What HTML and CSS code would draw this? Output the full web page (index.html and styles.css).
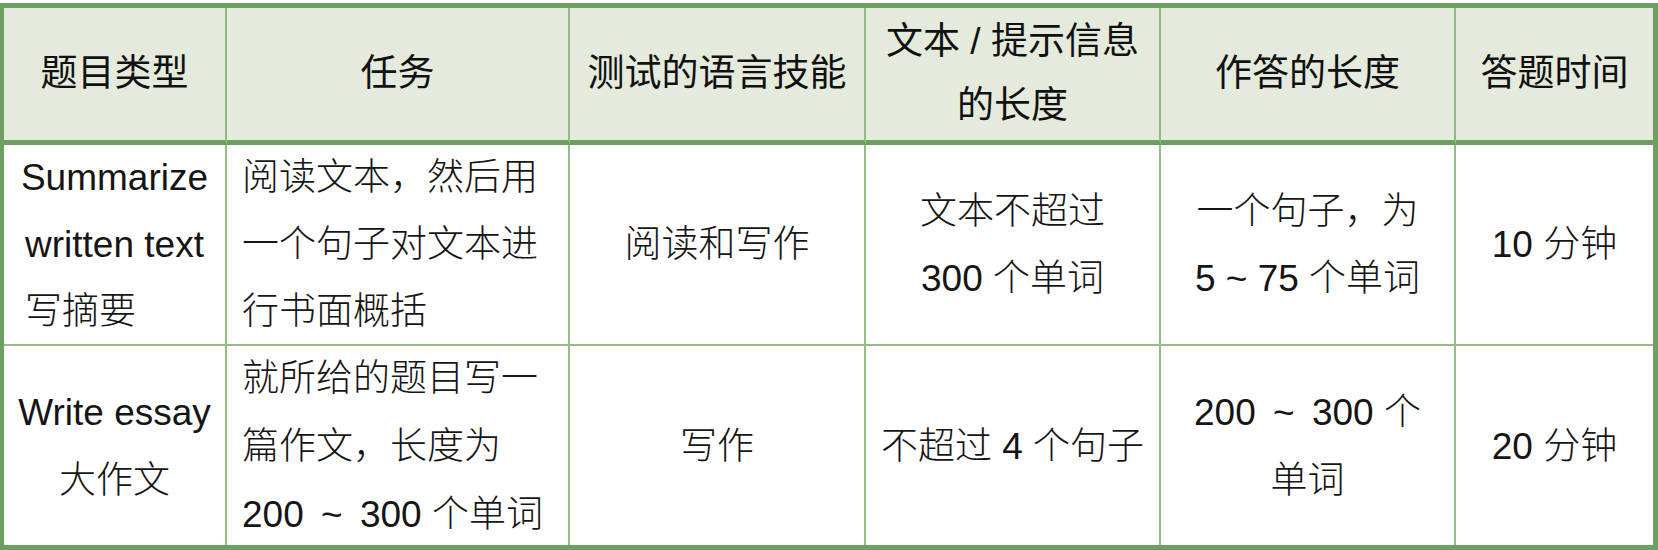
FILE: index.html
```html
<!DOCTYPE html>
<html lang="zh-CN">
<head>
<meta charset="utf-8">
<title>题目类型</title>
<link rel="stylesheet" href="styles.css">
</head>
<body>
<div class="table">
  <div class="cell head"><p>题目类型</p></div>
  <div class="cell head"><p>任务</p></div>
  <div class="cell head"><p>测试的语言技能</p></div>
  <div class="cell head"><p>文本 / 提示信息<br>的长度</p></div>
  <div class="cell head"><p>作答的长度</p></div>
  <div class="cell head last"><p>答题时间</p></div>

  <div class="cell row1 name-mixed"><p class="c">Summarize<br>written text</p><p class="l">写摘要</p></div>
  <div class="cell row1 left"><p>阅读文本，然后用<br>一个句子对文本进<br>行书面概括</p></div>
  <div class="cell row1"><p>阅读和写作</p></div>
  <div class="cell row1"><p>文本不超过<br>300 个单词</p></div>
  <div class="cell row1"><p>一个句子，为<br>5 ~ 75 个单词</p></div>
  <div class="cell row1 last"><p>10 分钟</p></div>

  <div class="cell row2"><p>Write essay<br>大作文</p></div>
  <div class="cell row2 left"><p>就所给的题目写一<br>篇作文，长度为<br>200 <span class="tilde">~</span> 300 个单词</p></div>
  <div class="cell row2"><p>写作</p></div>
  <div class="cell row2"><p>不超过 4 个句子</p></div>
  <div class="cell row2"><p>200 <span class="tilde">~</span> 300 个<br>单词</p></div>
  <div class="cell row2 last"><p>20 分钟</p></div>
</div>
</body>
</html>
```

FILE: styles.css
```css
html, body {
  margin: 0;
  padding: 0;
  background: #ffffff;
}

body {
  padding-top: 3px;
  font-family: "Liberation Sans", "Noto Sans CJK SC", sans-serif;
  color: #151515;
}

.table {
  display: grid;
  grid-template-columns: 223px 343px 296px 295px 295px 197px;
  grid-template-rows: 137px 201px 199px;
  border-top: 5px solid #6c9f60;
  border-left: 4px solid #6c9f60;
  border-right: 5px solid #6c9f60;
  border-bottom: 5px solid #6c9f60;
  width: 1649px;
}

.cell {
  display: flex;
  flex-direction: column;
  justify-content: center;
  text-align: center;
  font-size: 37px;
  font-weight: 300;
  line-height: 67px;
  border-right: 2px solid #93bf86;
  white-space: nowrap;
}

.cell p {
  margin: 0;
}

.cell.last {
  border-right: none;
}

.head {
  background: #e4eadc;
  font-weight: 400;
  line-height: 64px;
  color: #111111;
  border-bottom: 5px solid #6c9f60;
  border-right-color: #8fbb82;
}

.row1 {
  border-bottom: 2px solid #93bf86;
}

.row2 {
  line-height: 68px;
  padding-top: 3px;
}

.left {
  text-align: left;
  padding-left: 15px;
}

.tilde {
  padding: 0 7px;
}

.name-mixed .c {
  text-align: center;
}

.name-mixed .l {
  text-align: left;
  padding-left: 21px;
}
```
